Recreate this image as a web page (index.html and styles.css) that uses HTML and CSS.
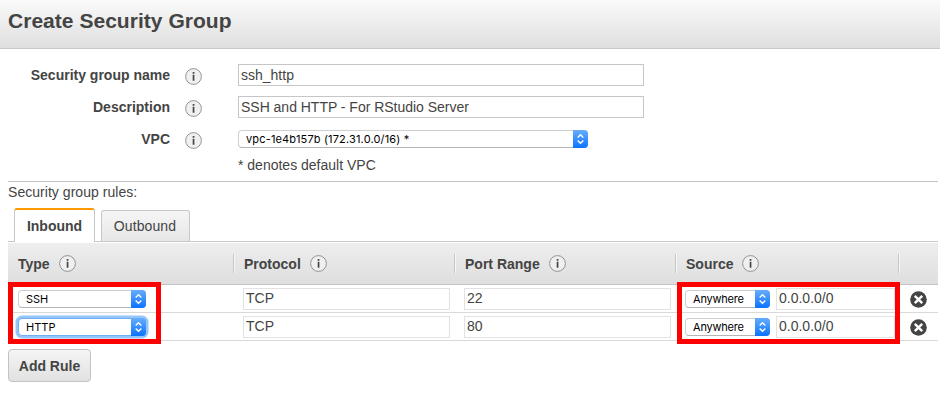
FILE: index.html
```html
<!DOCTYPE html>
<html lang="en">
<head>
<meta charset="utf-8">
<title>Create Security Group</title>
<link rel="stylesheet" href="styles.css">
</head>
<body>
<svg width="0" height="0" class="defs" aria-hidden="true">
  <symbol id="info" viewBox="0 0 17 17"><circle cx="8.5" cy="8.5" r="7.9" fill="#f0f0f0" stroke="#929292"/><path d="M7.7 4h1.7v1.7H7.7zM7.7 6.8h1.7v6H7.7z" fill="#444"/></symbol>
  <symbol id="arrows" viewBox="0 0 15 18"><path d="M4.7 7.5 7.5 4.8l2.8 2.7M4.7 10.5l2.8 2.7 2.8-2.7" fill="none" stroke="#fff" stroke-width="1.4"/></symbol>
  <symbol id="remove" viewBox="0 0 17 17"><circle cx="8.5" cy="8.5" r="8.3" fill="#444"/><path d="m4.8 4.8 7.4 7.4m0-7.4-7.4 7.4" stroke="#fff" stroke-width="2.4"/></symbol>
</svg>
<header class="title-bar"><h1>Create Security Group</h1></header>
<main>
  <section class="form">
    <div class="field"><span class="label">Security group name</span><svg class="info"><use href="#info"/></svg><div class="input wide">ssh_http</div></div>
    <div class="field"><span class="label">Description</span><svg class="info"><use href="#info"/></svg><div class="input wide desc">SSH and HTTP - For RStudio Server</div></div>
    <div class="field"><span class="label">VPC</span><svg class="info"><use href="#info"/></svg><div class="select vpc"><span>vpc-1e4b157b (172.31.0.0/16) *</span><svg class="arrows"><use href="#arrows"/></svg></div></div>
    <p class="note">* denotes default VPC</p>
  </section>
  <section class="rules">
    <p class="rules-title">Security group rules:</p>
    <nav class="tabs"><div class="tab active">Inbound</div><div class="tab">Outbound</div></nav>
    <div class="table">
      <div class="row head">
        <div class="cell">Type<svg class="info"><use href="#info"/></svg></div>
        <div class="cell">Protocol<svg class="info"><use href="#info"/></svg></div>
        <div class="cell">Port Range<svg class="info"><use href="#info"/></svg></div>
        <div class="cell">Source<svg class="info"><use href="#info"/></svg></div>
        <div class="cell"></div>
      </div>
      <div class="row">
        <div class="cell"><div class="select type"><span>SSH</span><svg class="arrows"><use href="#arrows"/></svg></div></div>
        <div class="cell"><div class="input">TCP</div></div>
        <div class="cell"><div class="input">22</div></div>
        <div class="cell source"><div class="select"><span>Anywhere</span><svg class="arrows"><use href="#arrows"/></svg></div><div class="input">0.0.0.0/0</div></div>
        <div class="cell"><svg class="remove"><use href="#remove"/></svg></div>
      </div>
      <div class="row">
        <div class="cell"><div class="select type focused"><span>HTTP</span><svg class="arrows"><use href="#arrows"/></svg></div></div>
        <div class="cell"><div class="input">TCP</div></div>
        <div class="cell"><div class="input">80</div></div>
        <div class="cell source"><div class="select"><span>Anywhere</span><svg class="arrows"><use href="#arrows"/></svg></div><div class="input">0.0.0.0/0</div></div>
        <div class="cell"><svg class="remove"><use href="#remove"/></svg></div>
      </div>
      <div class="highlight highlight-type"></div>
      <div class="highlight highlight-source"></div>
    </div>
    <div class="button">Add Rule</div>
  </section>
</main>
</body>
</html>
```

FILE: styles.css
```css
* { box-sizing: border-box; }
body { margin: 0; height: 401px; overflow: hidden; background: #fff; color: #444; font: 14px/20px "Liberation Sans", Arial, sans-serif; }
h1, p { margin: 0; }
svg { display: block; flex: none; }
.defs { position: absolute; }
.title-bar { height: 49px; padding: 8px 8px 0; border-bottom: 1px solid #c8c8c8; background: linear-gradient(#fafafa, #dfdfdf); }
h1 { font-size: 21px; line-height: 26px; letter-spacing: .03px; white-space: nowrap; }
main { padding: 10px 2px 0 8px; }
.form { height: 123px; border-bottom: 1px solid #c4c4c4; }
.field { height: 32px; display: flex; align-items: center; }
.label { width: 162px; text-align: right; font-weight: bold; }
.info { width: 17px; height: 17px; }
.field .info { margin: 3px 36px 0 15px; }
.input { height: 22px; border: 1px solid #e2e2e2; background: #fff; padding: 0 2px; line-height: 19px; white-space: nowrap; }
.input.wide { width: 406px; border-color: #c6c6c6; line-height: 21px; }
.desc { letter-spacing: -.02px; }
.select { height: 18px; flex: none; display: flex; justify-content: space-between; border: 1px solid #cfcfcf; border-bottom-color: #b5b5b5; border-radius: 4px; background: #fff; color: #000; font: 11px/17px Inter, sans-serif; padding-left: 7px; white-space: nowrap; }
.arrows { width: 15px; height: 18px; margin: -1px -1px 0 0; border-radius: 0 4px 4px 0; background: linear-gradient(#66adfa, #0c74ff); }
.vpc { width: 350px; margin-top: -1px; letter-spacing: .16px; }
.note { padding: 0 0 0 230px; }
.rules-title { height: 26px; letter-spacing: .04px; }
.tabs { height: 34px; display: flex; align-items: flex-end; gap: 6px; padding-left: 6px; border-bottom: 1px solid #c8c8c8; }
.tab { width: 89px; height: 31px; padding-right: 1px; border: 1px solid #c8c8c8; border-bottom: 0; border-radius: 3px 3px 0 0; background: linear-gradient(#f5f5f5, #e6e6e6); line-height: 31px; letter-spacing: .1px; text-align: center; }
.tab.active { width: 81px; height: 34px; padding: 0; margin-bottom: -1px; border-top: 2px solid #f90; background: #fff; font-weight: bold; line-height: 32px; letter-spacing: 0; }
.table { position: relative; margin-top: 1px; }
.row { height: 28px; display: grid; grid-template-columns: 225px 221px 221px 223px 40px; align-items: center; border-bottom: 1px solid #d9d9d9; }
.row.head { height: 42px; border-color: #c4c4c4; background: linear-gradient(#eee, #dedede); font-weight: bold; }
.cell { height: 22px; display: flex; align-items: center; padding-left: 10px; }
.head .cell { height: 19px; gap: 9px; padding-left: 10px; border-left: 1px solid #c6c6c6; box-shadow: inset 1px 0 #f7f7f7; }
.head .cell:first-child { border: 0; box-shadow: none; }
.cell > .input { width: 207px; }
.select.type { width: 128px; }
.select.focused { border-color: #71aef0; box-shadow: 0 0 0 2.5px #94c5fb; }
.source .select { width: 85px; letter-spacing: -.2px; }
.cell.source .input { width: 119px; margin-left: 6px; }
.row:not(.head) .cell:last-child { padding-left: 12px; }
.remove { width: 17px; height: 17px; margin-top: 1px; }
.highlight { position: absolute; top: 39px; height: 62px; border: 5px solid red; }
.highlight-type { left: 0; width: 153px; }
.highlight-source { left: 669px; width: 223px; }
.button { width: 83px; height: 33px; margin-top: 8px; border: 1px solid #c3c3c3; border-radius: 4px; background: linear-gradient(#f5f5f5, #e1e1e1); font-weight: bold; line-height: 32px; text-align: center; }
```
